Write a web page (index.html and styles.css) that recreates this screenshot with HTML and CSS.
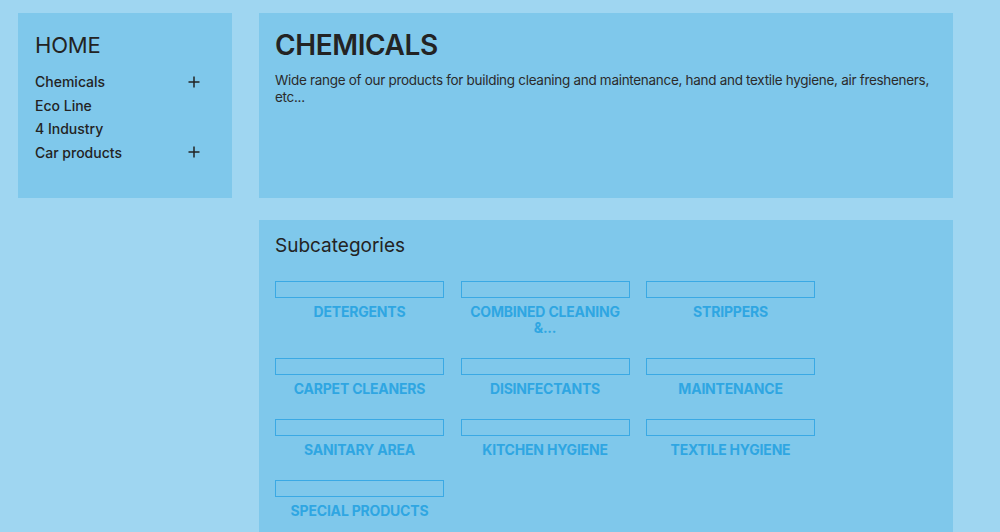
FILE: index.html
```html
<!DOCTYPE html>
<html lang="en">
<head>
<meta charset="utf-8">
<title>Chemicals</title>
<link rel="stylesheet" href="styles.css">
</head>
<body>
<div class="page">
  <aside class="sidebar">
    <div class="panel nav-panel">
      <h2 class="nav-title">HOME</h2>
      <ul class="nav-list">
        <li class="nav-item"><span>Chemicals</span><svg class="plus" viewBox="0 0 12 12"><path d="M6 0.5V11.5M0.5 6H11.5"/></svg></li>
        <li class="nav-item"><span>Eco Line</span></li>
        <li class="nav-item"><span>4 Industry</span></li>
        <li class="nav-item"><span>Car products</span><svg class="plus" viewBox="0 0 12 12"><path d="M6 0.5V11.5M0.5 6H11.5"/></svg></li>
      </ul>
    </div>
  </aside>
  <main class="content">
    <section class="panel header-panel">
      <h1 class="cat-title">CHEMICALS</h1>
      <p class="cat-desc">Wide range of our products for building cleaning and maintenance, hand and textile hygiene, air fresheners, etc...</p>
    </section>
    <section class="panel sub-panel">
      <h2 class="sub-title">Subcategories</h2>
      <div class="sub-grid">
        <div class="sub-item"><div class="sub-img"></div><div class="sub-name">DETERGENTS</div></div>
        <div class="sub-item"><div class="sub-img"></div><div class="sub-name">COMBINED CLEANING &amp;...</div></div>
        <div class="sub-item"><div class="sub-img"></div><div class="sub-name">STRIPPERS</div></div>
        <div class="sub-item"><div class="sub-img"></div><div class="sub-name">CARPET CLEANERS</div></div>
        <div class="sub-item"><div class="sub-img"></div><div class="sub-name">DISINFECTANTS</div></div>
        <div class="sub-item"><div class="sub-img"></div><div class="sub-name">MAINTENANCE</div></div>
        <div class="sub-item"><div class="sub-img"></div><div class="sub-name">SANITARY AREA</div></div>
        <div class="sub-item"><div class="sub-img"></div><div class="sub-name">KITCHEN HYGIENE</div></div>
        <div class="sub-item"><div class="sub-img"></div><div class="sub-name">TEXTILE HYGIENE</div></div>
        <div class="sub-item"><div class="sub-img"></div><div class="sub-name">SPECIAL PRODUCTS</div></div>
      </div>
    </section>
  </main>
</div>
</body>
</html>
```

FILE: styles.css
```css
* { box-sizing: border-box; }
html, body { margin: 0; padding: 0; }
body {
  background: #9fd6f1;
  font-family: Inter, "Noto Sans", sans-serif;
  color: #232323;
  height: 532px;
  overflow: hidden;
}
.page {
  display: flex;
  gap: 27px;
  padding: 13px 47px 0 18px;
}
.sidebar { width: 214px; flex: none; }
.panel { background: #7fc8eb; }
.nav-panel {
  height: 185px;
  padding: 19px 31px 0 17px;
}
.nav-title {
  margin: 0 0 12px;
  font-size: 22px;
  font-weight: 400;
  line-height: 26px;
  letter-spacing: -0.2px;
}
.nav-list { list-style: none; margin: 0; padding: 0; }
.nav-item {
  display: flex;
  justify-content: space-between;
  align-items: center;
  font-size: 14px;
  font-weight: 500;
  line-height: 23.5px;
}
.plus { width: 12px; height: 12px; fill: none; stroke: #232323; stroke-width: 1.5; margin-right: 1px; }
.content { flex: 1; display: flex; flex-direction: column; gap: 22px; }
.header-panel {
  height: 185px;
  padding: 15px 16px 0;
}
.cat-title {
  margin: 0 0 10px;
  font-size: 28px;
  font-weight: 600;
  line-height: 34px;
  letter-spacing: -0.4px;
}
.cat-desc {
  margin: 0;
  font-size: 13.5px;
  line-height: 17px;
  letter-spacing: -0.3px;
  color: #2b2b2b;
}
.sub-panel {
  padding: 14px 16px 20px;
  min-height: 330px;
}
.sub-title {
  margin: 0 0 23px;
  font-size: 19px;
  font-weight: 400;
  line-height: 24px;
}
.sub-grid {
  display: grid;
  grid-template-columns: repeat(3, 169px);
  column-gap: 16.5px;
  row-gap: 22px;
  align-items: start;
}
.sub-img {
  height: 17px;
  border: 1px solid #3aa9e4;
}
.sub-name {
  margin-top: 6px;
  text-align: center;
  color: #2fa6e2;
  font-size: 14px;
  font-weight: 700;
  line-height: 16px;
  letter-spacing: -0.2px;
}
```
